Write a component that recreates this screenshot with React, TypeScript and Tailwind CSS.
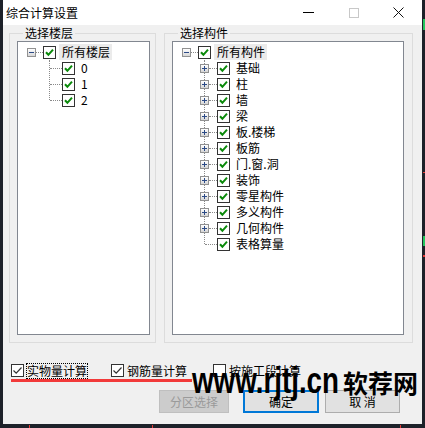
import React from "react";

const floors = ["0", "1", "2"];

const parts = [
  "基础",
  "柱",
  "墙",
  "梁",
  "板.楼梯",
  "板筋",
  "门.窗.洞",
  "装饰",
  "零星构件",
  "多义构件",
  "几何构件",
];

function TreeCheck() {
  return (
    <span className="flex h-[13px] w-[13px] shrink-0 items-center justify-center border border-[#333] bg-white">
      <svg width="9" height="9" viewBox="0 0 9 9">
        <path d="M1 4.2 L3.4 6.8 L8 1.6" stroke="#0a8a0a" strokeWidth="2" fill="none" />
      </svg>
    </span>
  );
}

function Expander({ open }: { open?: boolean }) {
  return (
    <span className="relative flex h-[9px] w-[9px] shrink-0 items-center justify-center border border-[#919191] bg-gradient-to-b from-white to-[#d6d6d6]">
      <span className="absolute h-px w-[5px] bg-[#2b4a86]" />
      {!open && <span className="absolute h-[5px] w-px bg-[#2b4a86]" />}
    </span>
  );
}

function Dots({ w }: { w: string }) {
  return <span className={`h-0 shrink-0 border-t border-dotted border-[#8a8a8a] ${w}`} />;
}

function RootRow({ label }: { label: string }) {
  return (
    <div className="flex h-4 items-center pl-[9px]">
      <Expander open />
      <Dots w="w-[7px]" />
      <TreeCheck />
      <span className="ml-[3px] h-4 bg-[#ebebeb] pl-[3px] pr-[2px] leading-4">{label}</span>
    </div>
  );
}

function LeafRow({ label, plus }: { label: string; plus?: boolean }) {
  return (
    <div className="flex h-4 items-center">
      {plus ? (
        <>
          <span className="w-[27px] shrink-0" />
          <Expander />
          <Dots w="w-[8px]" />
        </>
      ) : (
        <>
          <span className="w-[32px] shrink-0" />
          <Dots w="w-[12px]" />
        </>
      )}
      <TreeCheck />
      <span className="ml-[6px] leading-4">{label}</span>
    </div>
  );
}

function Children({ children }: { children: React.ReactNode }) {
  return (
    <div className="relative">
      <span className="absolute left-[31px] top-0 bottom-2 border-l border-dotted border-[#8a8a8a]" />
      {children}
    </div>
  );
}

function Group({ title, width, listWidth, children }: { title: string; width: string; listWidth: string; children: React.ReactNode }) {
  return (
    <fieldset className={`h-[318px] shrink-0 border border-[#dcdcdc] pl-[7px] ${width}`}>
      <legend className="ml-[6px] px-[2px] leading-4">{title}</legend>
      <div className={`h-[294px] border border-[#828790] bg-white pt-[2px] ${listWidth}`}>{children}</div>
    </fieldset>
  );
}

function BottomCheck({ label, checked, focus }: { label: string; checked?: boolean; focus?: boolean }) {
  return (
    <div className="flex items-center">
      <span className="flex h-[13px] w-[13px] items-center justify-center border border-[#333] bg-white">
        {checked && (
          <svg width="11" height="11" viewBox="0 0 11 11">
            <path d="M1.5 5.5 L4.2 8.2 L9.5 2.5" stroke="#333" strokeWidth="1.2" fill="none" />
          </svg>
        )}
      </span>
      <span className={`ml-[2px] px-px leading-4 ${focus ? "outline-1 outline-dotted outline-black -outline-offset-1" : ""}`}>
        {label}
      </span>
    </div>
  );
}

export default function App() {
  return (
    <div className="relative flex h-[428px] w-[425px] bg-[#1d2129] font-['Noto_Sans_CJK_SC',sans-serif] text-[12px] text-black">
      <div className="ml-[3px] flex h-[424px] w-[419px] flex-col bg-[#f0f0f0]">
        <div className="flex h-[25px] shrink-0 items-center bg-white">
          <span className="pl-[3px] leading-4">综合计算设置</span>
          <div className="ml-auto flex h-full">
            <div className="flex w-[45px] items-center justify-center">
              <span className="h-px w-[11px] bg-black" />
            </div>
            <div className="flex w-[45px] items-center justify-center">
              <span className="h-[10px] w-[10px] border border-[#c8c8c8]" />
            </div>
            <div className="flex w-[45px] items-center justify-center">
              <svg width="11" height="11" viewBox="0 0 11 11">
                <path d="M0.5 0.5 L10.5 10.5 M10.5 0.5 L0.5 10.5" stroke="#111" strokeWidth="1" />
              </svg>
            </div>
            <span className="w-px" />
          </div>
        </div>

        <div className="flex gap-[8px] pl-[6px]">
          <Group title="选择楼层" width="w-[147px]" listWidth="w-[133px]">
            <RootRow label="所有楼层" />
            <Children>
              {floors.map((f) => (
                <LeafRow key={f} label={f} />
              ))}
            </Children>
          </Group>
          <Group title="选择构件" width="w-[249px]" listWidth="w-[232px]">
            <RootRow label="所有构件" />
            <Children>
              {parts.map((p) => (
                <LeafRow key={p} label={p} plus />
              ))}
              <LeafRow label="表格算量" />
            </Children>
          </Group>
        </div>

        <div className="mt-[21px] flex h-[13px] items-center pl-[8px]">
          <div className="w-[100px]">
            <BottomCheck label="实物量计算" checked focus />
          </div>
          <div className="w-[102px]">
            <BottomCheck label="钢筋量计算" checked />
          </div>
          <BottomCheck label="按施工段计算" />
        </div>

        <div className="mt-[13px] flex h-[23px] pl-[156px]">
          <button className="flex w-[70px] items-center justify-center border border-[#bfbfbf] bg-[#cccccc] text-[#9a9a9a]">
            分区选择
          </button>
          <button className="ml-[14px] flex w-[76px] items-center justify-center border-2 border-[#0078d7] bg-[#e1e1e1]">
            确定
          </button>
          <button className="ml-[6px] flex w-[75px] items-center justify-center border border-[#adadad] bg-[#e1e1e1]">
            取 消
          </button>
        </div>
      </div>

      {/* annotation + watermark over the dialog */}
      <span className="absolute left-[11px] top-[379px] h-[3px] w-[181px] bg-[#f23a3a]" />
      <span className="absolute left-[192px] top-[362px] origin-left scale-x-[0.75] font-['Liberation_Sans',sans-serif] text-[37px] font-bold leading-[37px] text-black">
        www.rjtj.cn
      </span>
      <span className="absolute left-[343px] top-[370px] text-[25px] font-bold leading-[25px] text-black">软荐网</span>

      {/* bits of the CAD canvas behind */}
      <span className="absolute left-[423px] top-[19px] h-[11px] w-[2px] bg-[#22c55e]" />
      <span className="absolute left-[423px] top-[236px] h-[10px] w-[2px] bg-[#22c55e]" />
      <span className="absolute left-[423px] top-[172px] h-px w-[2px] bg-[#e53935]" />
      <span className="absolute left-[423px] top-[255px] h-[2px] w-[2px] bg-[#e53935]" />
      <span className="absolute left-[29px] top-[425px] h-[3px] w-px bg-[#e53935]" />
      <span className="absolute left-[152px] top-[425px] h-[3px] w-px bg-[#e53935]" />
      <span className="absolute left-[400px] top-[425px] h-[3px] w-px bg-[#e53935]" />
    </div>
  );
}
